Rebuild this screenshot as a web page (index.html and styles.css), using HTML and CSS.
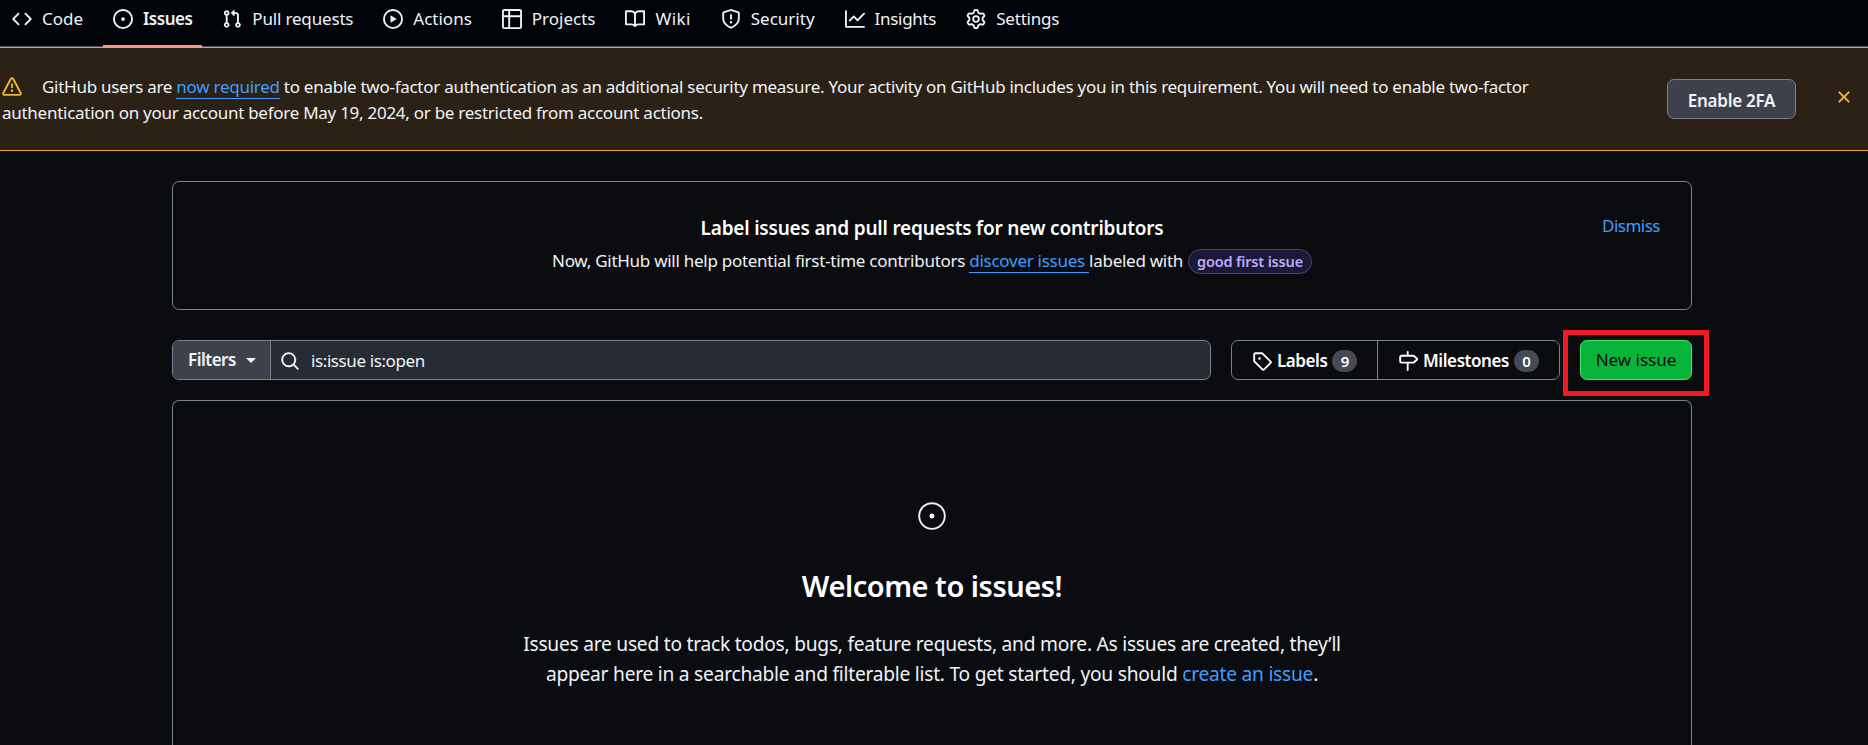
FILE: index.html
```html
<!DOCTYPE html>
<html lang="en">
<head>
<meta charset="utf-8">
<title>Issues</title>
<link rel="stylesheet" href="styles.css">
</head>
<body>
<header class="repo-nav">
  <a class="tab tab-code"><svg class="icon" viewBox="0 0 16 16"><path d="m11.28 3.22 4.25 4.25a.75.75 0 0 1 0 1.06l-4.25 4.25a.749.749 0 0 1-1.275-.326.749.749 0 0 1 .215-.734L13.94 8l-3.72-3.72a.749.749 0 0 1 .326-1.275.749.749 0 0 1 .734.215Zm-6.56 0a.751.751 0 0 1 1.042.018.751.751 0 0 1 .018 1.042L2.06 8l3.72 3.72a.749.749 0 0 1-.326 1.275.749.749 0 0 1-.734-.215L.47 8.53a.75.75 0 0 1 0-1.06Z"/></svg><span class="t">Code</span></a>
  <a class="tab tab-issues"><svg class="icon" viewBox="0 0 16 16"><path d="M8 9.5a1.500 1.500 0 1 0 0-3 1.500 1.500 0 0 0 0 3Z"/><path d="M8 0a8 8 0 1 1 0 16A8 8 0 0 1 8 0ZM1.500 8a6.500 6.500 0 1 0 13 0 6.500 6.500 0 0 0-13 0Z"/></svg><span class="t">Issues</span></a>
  <a class="tab tab-pulls"><svg class="icon" viewBox="0 0 16 16"><path d="M1.500 3.250a2.250 2.250 0 1 1 3 2.122v5.256a2.251 2.251 0 1 1-1.500 0V5.372A2.250 2.250 0 0 1 1.500 3.250Zm5.677-.177L9.573.677A.25.25 0 0 1 10 .854V2.500h1A2.500 2.500 0 0 1 13.500 5v5.628a2.251 2.251 0 1 1-1.500 0V5a1 1 0 0 0-1-1h-1v1.646a.25.25 0 0 1-.427.177L7.177 3.427a.25.25 0 0 1 0-.354ZM3.750 2.500a.75.75 0 1 0 0 1.500.75.75 0 0 0 0-1.500Zm0 9.500a.75.75 0 1 0 0 1.500.75.75 0 0 0 0-1.500Zm8.250.75a.75.75 0 1 0 1.500 0 .75.75 0 0 0-1.500 0Z"/></svg><span class="t">Pull requests</span></a>
  <a class="tab tab-actions"><svg class="icon" viewBox="0 0 16 16"><path d="M8 0a8 8 0 1 1 0 16A8 8 0 0 1 8 0ZM1.500 8a6.500 6.500 0 1 0 13 0 6.500 6.500 0 0 0-13 0Zm4.879-2.773 4.264 2.559a.25.25 0 0 1 0 .428l-4.264 2.559A.25.25 0 0 1 6 10.559V5.442a.25.25 0 0 1 .379-.215Z"/></svg><span class="t">Actions</span></a>
  <a class="tab tab-projects"><svg class="icon" viewBox="0 0 16 16"><path d="M0 1.750C0 .784.784 0 1.750 0h12.500C15.216 0 16 .784 16 1.750v12.500A1.750 1.750 0 0 1 14.250 16H1.750A1.750 1.750 0 0 1 0 14.250ZM6.500 6.500v8h7.750a.25.25 0 0 0 .25-.25V6.500Zm8-1.500V1.750a.25.25 0 0 0-.25-.25H6.500V5Zm-13 1.500v7.750c0 .138.112.25.25.25H5v-8ZM5 5V1.500H1.750a.25.25 0 0 0-.25.25V5Z"/></svg><span class="t">Projects</span></a>
  <a class="tab tab-wiki"><svg class="icon" viewBox="0 0 16 16"><path d="M0 1.750A.75.75 0 0 1 .75 1h4.253c1.227 0 2.317.59 3 1.501A3.743 3.743 0 0 1 11.006 1h4.245a.75.75 0 0 1 .75.75v10.500a.75.75 0 0 1-.75.75h-4.507a2.250 2.250 0 0 0-1.591.659l-.622.621a.75.75 0 0 1-1.060 0l-.622-.621A2.250 2.250 0 0 0 5.258 13H.75a.75.75 0 0 1-.75-.75Zm7.251 10.324.004-5.073-.002-2.253A2.250 2.250 0 0 0 5.003 2.500H1.500v9h3.757a3.750 3.750 0 0 1 1.994.574ZM8.755 4.750l-.004 7.322a3.752 3.752 0 0 1 1.992-.572H14.500v-9h-3.495a2.250 2.250 0 0 0-2.250 2.250Z"/></svg><span class="t">Wiki</span></a>
  <a class="tab tab-security"><svg class="icon" viewBox="0 0 16 16"><path d="M7.467.133a1.748 1.748 0 0 1 1.066 0l5.250 1.680A1.750 1.750 0 0 1 15 3.480V7c0 1.566-.32 3.182-1.303 4.682-.983 1.498-2.585 2.813-5.032 3.855a1.697 1.697 0 0 1-1.330 0c-2.447-1.042-4.049-2.357-5.032-3.855C1.320 10.182 1 8.566 1 7V3.480a1.750 1.750 0 0 1 1.217-1.667Zm.61 1.429a.25.25 0 0 0-.153 0l-5.250 1.680a.25.25 0 0 0-.174.238V7c0 1.358.275 2.666 1.057 3.860.784 1.194 2.121 2.340 4.366 3.297a.196.196 0 0 0 .154 0c2.245-.956 3.582-2.104 4.366-3.298C13.225 9.666 13.500 8.360 13.500 7V3.480a.251.251 0 0 0-.174-.237l-5.250-1.680ZM8.750 4.750v3a.75.75 0 0 1-1.500 0v-3a.75.75 0 0 1 1.500 0ZM9 10.500a1 1 0 1 1-2 0 1 1 0 0 1 2 0Z"/></svg><span class="t">Security</span></a>
  <a class="tab tab-insights"><svg class="icon" viewBox="0 0 16 16"><path d="M1.500 1.750V13.500h13.750a.75.75 0 0 1 0 1.500H.75a.75.75 0 0 1-.75-.75V1.750a.75.75 0 0 1 1.500 0Zm14.280 2.530-5.250 5.250a.75.75 0 0 1-1.060 0L7 7.060 4.280 9.780a.751.751 0 0 1-1.042-.018.751.751 0 0 1-.018-1.042l3.250-3.250a.75.75 0 0 1 1.060 0L10 7.940l4.720-4.720a.751.751 0 0 1 1.042.018.751.751 0 0 1 .018 1.042Z"/></svg><span class="t">Insights</span></a>
  <a class="tab tab-settings"><svg class="icon" viewBox="0 0 16 16"><path d="M8 0a8.200 8.200 0 0 1 .701.031C9.444.095 9.990.645 10.160 1.290l.288 1.107c.018.066.079.158.212.224.231.114.454.243.668.386.123.082.233.09.299.071l1.103-.303c.644-.176 1.392.021 1.820.63.27.385.506.792.704 1.218.315.675.111 1.422-.364 1.891l-.814.806c-.049.048-.098.147-.088.294.016.257.016.515 0 .772-.01.147.038.246.088.294l.814.806c.475.469.679 1.216.364 1.891a7.977 7.977 0 0 1-.704 1.217c-.428.61-1.176.807-1.820.63l-1.102-.302c-.067-.019-.177-.011-.3.071a5.909 5.909 0 0 1-.668.386c-.133.066-.194.158-.211.224l-.29 1.106c-.168.646-.715 1.196-1.458 1.260a8.006 8.006 0 0 1-1.402 0c-.743-.064-1.289-.614-1.458-1.260l-.289-1.106c-.018-.066-.079-.158-.212-.224a5.738 5.738 0 0 1-.668-.386c-.123-.082-.233-.09-.299-.071l-1.103.303c-.644.176-1.392-.021-1.820-.63a8.120 8.120 0 0 1-.704-1.218c-.315-.675-.111-1.422.363-1.891l.815-.806c.05-.048.098-.147.088-.294a6.214 6.214 0 0 1 0-.772c.01-.147-.038-.246-.088-.294l-.815-.806C.635 6.045.431 5.298.746 4.623a7.920 7.920 0 0 1 .704-1.217c.428-.61 1.176-.807 1.820-.63l1.102.302c.067.019.177.011.3-.071.214-.143.437-.272.668-.386.133-.066.194-.158.211-.224l.29-1.106C6.009.645 6.556.095 7.299.03 7.530.01 7.764 0 8 0Zm-.571 1.525c-.036.003-.108.036-.137.146l-.289 1.105c-.147.561-.549.967-.998 1.189-.173.086-.34.183-.5.290-.417.278-.97.423-1.529.270l-1.103-.303c-.109-.03-.175.016-.195.045-.22.312-.412.644-.573.990-.014.031-.021.11.059.190l.815.806c.411.406.562.957.530 1.456a4.709 4.709 0 0 0 0 .582c.032.499-.119 1.050-.530 1.456l-.815.806c-.081.080-.073.159-.059.190.162.346.353.677.573.989.020.030.085.076.195.046l1.102-.303c.560-.153 1.113-.008 1.530.270.161.107.328.204.501.290.447.222.850.629.997 1.189l.289 1.105c.029.109.101.143.137.146a6.600 6.600 0 0 0 1.142 0c.036-.003.108-.036.137-.146l.289-1.105c.147-.561.549-.967.998-1.189.173-.086.340-.183.500-.290.417-.278.970-.423 1.529-.270l1.103.303c.109.029.175-.016.195-.045.220-.313.411-.644.573-.990.014-.031.021-.110-.059-.190l-.815-.806c-.411-.406-.562-.957-.530-1.456a4.709 4.709 0 0 0 0-.582c-.032-.499.119-1.050.530-1.456l.815-.806c.081-.080.073-.159.059-.190a6.464 6.464 0 0 0-.573-.989c-.020-.030-.085-.076-.195-.046l-1.102.303c-.560.153-1.113.008-1.530-.270a4.440 4.440 0 0 0-.501-.290c-.447-.222-.850-.629-.997-1.189l-.289-1.105c-.029-.110-.101-.143-.137-.146a6.600 6.600 0 0 0-1.142 0ZM11 8a3 3 0 1 1-6 0 3 3 0 0 1 6 0ZM9.500 8a1.500 1.500 0 1 0-3.001.001A1.500 1.500 0 0 0 9.500 8Z"/></svg><span class="t">Settings</span></a>
</header>

<section class="banner">
  <div class="banner-text">
    <div class="banner-line"><svg class="icon alert" viewBox="0 0 16 16"><path d="M6.457 1.047c.659-1.234 2.427-1.234 3.086 0l6.082 11.378A1.750 1.750 0 0 1 14.082 15H1.918a1.750 1.750 0 0 1-1.543-2.575Zm1.763.707a.25.25 0 0 0-.44 0L1.698 13.132a.25.25 0 0 0 .22.368h12.164a.25.25 0 0 0 .22-.368Zm.53 3.996v2.500a.75.75 0 0 1-1.500 0v-2.500a.75.75 0 0 1 1.500 0ZM9 11a1 1 0 1 1-2 0 1 1 0 0 1 2 0Z"/></svg><span class="t">GitHub users are <a class="link underlined">now required</a> to enable two-factor authentication as an additional security measure. Your activity on GitHub includes you in this requirement. You will need to enable two-factor</span></div>
    <div class="banner-line"><span class="t">authentication on your account before May 19, 2024, or be restricted from account actions.</span></div>
  </div>
  <button class="btn enable"><span class="t">Enable 2FA</span></button>
  <svg class="icon close" viewBox="0 0 16 16"><path d="M3.720 3.720a.75.75 0 0 1 1.060 0L8 6.940l3.220-3.220a.749.749 0 0 1 1.275.326.749.749 0 0 1-.215.734L9.060 8l3.220 3.220a.749.749 0 0 1-.326 1.275.749.749 0 0 1-.734-.215L8 9.060l-3.220 3.220a.751.751 0 0 1-1.042-.018.751.751 0 0 1-.018-1.042L6.940 8 3.720 4.780a.75.75 0 0 1 0-1.060Z"/></svg>
</section>

<main class="content">
  <section class="box tip">
    <a class="link dismiss"><span class="t">Dismiss</span></a>
    <h4 class="tip-title"><span class="t">Label issues and pull requests for new contributors</span></h4>
    <p class="tip-text"><span class="t">Now, GitHub will help potential first-time contributors <a class="link underlined">discover issues </a>labeled with</span><span class="pill">good first issue</span></p>
  </section>

  <div class="toolbar">
    <div class="search">
      <button class="filters"><span class="t">Filters</span><i class="caret"></i></button>
      <div class="query"><svg class="icon" viewBox="0 0 16 16"><path d="M10.680 11.740a6 6 0 0 1-7.922-8.982 6 6 0 0 1 8.982 7.922l3.040 3.040a.749.749 0 0 1-.326 1.275.749.749 0 0 1-.734-.215ZM11.500 7a4.499 4.499 0 1 0-8.997 0A4.499 4.499 0 0 0 11.500 7Z"/></svg><span class="t">is:issue is:open</span></div>
    </div>
    <nav class="subnav">
      <a class="subnav-item labels"><svg class="icon" viewBox="0 0 16 16"><path d="M1 7.775V2.750C1 1.784 1.784 1 2.750 1h5.025c.464 0 .910.184 1.238.513l6.250 6.250a1.750 1.750 0 0 1 0 2.474l-5.026 5.026a1.750 1.750 0 0 1-2.474 0l-6.250-6.250A1.752 1.752 0 0 1 1 7.775Zm1.500 0c0 .066.026.130.073.177l6.250 6.250a.25.25 0 0 0 .354 0l5.025-5.025a.25.25 0 0 0 0-.354l-6.250-6.250a.25.25 0 0 0-.177-.073H2.750a.25.25 0 0 0-.25.25ZM6 5a1 1 0 1 1 0 2 1 1 0 0 1 0-2Z"/></svg><span class="t">Labels</span><span class="counter">9</span></a>
      <a class="subnav-item milestones"><svg class="icon" viewBox="0 0 16 16"><path d="M7.750 0a.75.75 0 0 1 .75.75V3h3.634c.414 0 .814.147 1.130.414l2.070 1.750a1.750 1.750 0 0 1 0 2.672l-2.070 1.750a1.750 1.750 0 0 1-1.130.414H8.500v5.250a.75.75 0 0 1-1.500 0V10H2.750A1.750 1.750 0 0 1 1 8.250v-3.500C1 3.784 1.784 3 2.750 3H7V.750A.75.75 0 0 1 7.750 0Zm4.384 8.500a.25.25 0 0 0 .161-.060l2.070-1.750a.248.248 0 0 0 0-.380l-2.070-1.750a.25.25 0 0 0-.161-.060H2.750a.25.25 0 0 0-.25.25v3.500c0 .138.112.25.25.25h9.384Z"/></svg><span class="t">Milestones</span><span class="counter">0</span></a>
    </nav>
    <button class="btn new-issue"><span class="t">New issue</span><i class="highlight"></i></button>
  </div>

  <section class="box blank">
    <svg class="blank-icon" viewBox="0 0 24 24"><path d="M12 1c6.075 0 11 4.925 11 11s-4.925 11-11 11S1 18.075 1 12 5.925 1 12 1ZM2.500 12a9.500 9.500 0 0 0 9.500 9.500 9.500 9.500 0 0 0 9.500-9.500A9.500 9.500 0 0 0 12 2.500 9.500 9.500 0 0 0 2.500 12Zm9.500 2a2 2 0 1 1-.001-3.999A2 2 0 0 1 12 14Z"/></svg>
    <h3 class="blank-title"><span class="t">Welcome to issues!</span></h3>
    <p class="blank-text"><span class="t">Issues are used to track todos, bugs, feature requests, and more. As issues are created, they’ll</span><br><span class="t">appear here in a searchable and filterable list. To get started, you should <a class="link">create an issue</a>.</span></p>
  </section>
</main>
</body>
</html>
```
FILE: styles.css
```css
* { box-sizing: border-box; }

body {
  margin: 0;
  height: 745px;
  overflow: hidden;
  background: #0a0c10;
  color: #f0f3f6;
  font-family: "Noto Sans", "Open Sans", sans-serif;
  font-size: 17px;
  line-height: 26px;
  letter-spacing: -0.27px;
  display: flex;
  flex-direction: column;
}

h3, h4, p { margin: 0; }
button { font: inherit; color: inherit; letter-spacing: inherit; padding: 0; margin: 0; }
.t { white-space: pre; }
.icon { width: 20px; height: 20px; fill: currentColor; flex: none; display: block; }
.link { color: #409eff; }
.underlined { border-bottom: 1px solid #409eff; }

.repo-nav {
  height: 47px;
  flex: none;
  display: flex;
  background: #010409;
  border-bottom: 1px solid #4b515b;
  position: relative;
  z-index: 1;
}
.tab { display: flex; flex: none; align-items: center; gap: 10px; height: 47px; padding: 0 10px 10px 10px; margin-right: 10px; letter-spacing: 0; }
.tab-code { margin-left: 2px; }
.tab-issues { height: 48px; font-weight: 600; border-bottom: 3px solid #ff967d; padding-bottom: 8px; letter-spacing: -0.5px; }
.tab-pulls { letter-spacing: -0.17px; }
.tab-wiki { letter-spacing: 0.4px; }
.tab-insights { letter-spacing: -0.3px; }
.tab-settings { letter-spacing: -0.2px; }

.banner {
  height: 104px;
  flex: none;
  display: flex;
  background: #2b2115;
  border-top: 1px solid #eaa722;
  border-bottom: 1px solid #eaa722;
}
.banner-text { flex: 1; padding: 26px 0 0 2px; }
.banner-line { display: flex; align-items: center; height: 26px; }
.alert { color: #f0b72f; margin-right: 20px; }
.btn { height: 40px; flex: none; border-radius: 7px; border: 1px solid #7a828e; }
.enable { width: 129px; margin: 31px 38px 0 0; padding-top: 3px; background: #3c414b; font-weight: 600; }
.close { color: #f0b72f; margin: 39px 14px 0 0; }

.content { width: 1520px; margin: 30px 0 0 172px; flex: 1; display: flex; flex-direction: column; }
.box { border: 1px solid #7a828e; border-radius: 7px; }
.tip { height: 129px; flex: none; padding-top: 32px; text-align: center; position: relative; }
.dismiss { position: absolute; right: 31px; top: 31px; letter-spacing: -0.5px; }
.tip-title { font-size: 19px; font-weight: 600; line-height: 28px; letter-spacing: -0.2px; color: #fff; }
.tip-text { display: flex; justify-content: center; align-items: center; height: 38px; }
.pill { height: 25px; margin-left: 5px; padding: 0 8px; border: 1px solid #4a4176; border-radius: 13px; background: #1c1838; color: #bfa9fb; font-size: 14.5px; font-weight: 600; line-height: 23px; letter-spacing: -0.16px; }

.toolbar { height: 40px; flex: none; margin: 30px 0 20px; display: flex; }
.search { width: 1039px; display: flex; border: 1px solid #7a828e; border-radius: 7px; background: #272b33; overflow: hidden; }
.filters { width: 98px; display: flex; align-items: center; padding-left: 15px; background: #3c414b; border: 0; border-right: 1px solid #7a828e; font-weight: 600; letter-spacing: -0.5px; }
.caret { margin-left: 10px; border: 5px solid transparent; border-top-color: currentColor; border-bottom: 0; }
.query { display: flex; align-items: center; gap: 11px; padding: 2px 0 0 9px; letter-spacing: -0.4px; }
.subnav { width: 329px; margin-left: 20px; display: flex; border: 1px solid #7a828e; border-radius: 7px; font-weight: 600; letter-spacing: -0.43px; color: #fff; }
.subnav-item { display: flex; align-items: center; padding-top: 2px; }
.labels { width: 146px; padding-left: 20px; border-right: 1px solid #7a828e; }
.milestones { padding-left: 20px; }
.subnav-item .t { margin-left: 5px; }
.counter { height: 22px; min-width: 25px; margin-left: 5px; border-radius: 11px; background: #454b55; font-size: 15px; line-height: 22px; text-align: center; letter-spacing: 0; }
.new-issue { width: 112px; margin-left: auto; background: #09b43a; border-color: #4ae168; color: #0a0c10; letter-spacing: 0; position: relative; }
.highlight { position: absolute; left: -18px; top: -11px; width: 146px; height: 66px; border: 5px solid #ed1c24; }

.blank { flex: 1; border-bottom: 0; border-radius: 7px 7px 0 0; text-align: center; padding-top: 100px; }
.blank-icon { width: 30px; height: 30px; fill: currentColor; display: block; margin: 0 auto; }
.blank-title { margin-top: 32px; font-size: 29px; font-weight: 600; line-height: 45px; letter-spacing: -0.47px; color: #fff; }
.blank-text { margin-top: 21px; font-size: 19.2px; line-height: 30px; letter-spacing: -0.25px; }
```
